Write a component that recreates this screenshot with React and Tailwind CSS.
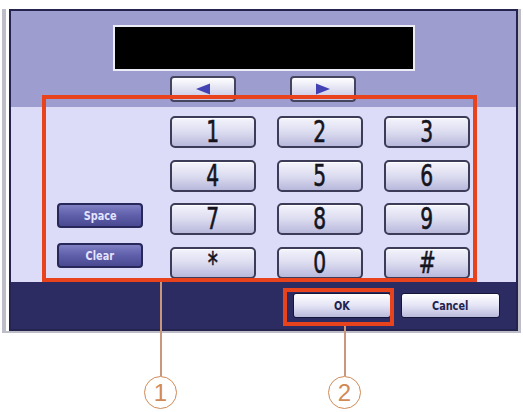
const keys = ["1", "2", "3", "4", "5", "6", "7", "8", "9", "*", "0", "#"];

function KeyButton({ label }) {
  return (
    <button className="h-[32px] rounded-[5px] border-2 border-[#3c3c58] bg-gradient-to-b from-[#f4f4fc] via-[#dcdcf0] to-[#b8b8dc] shadow-[inset_0_1px_0_#ffffff] flex items-center justify-center">
      <span className="inline-block scale-x-75 text-[30px] leading-none text-[#14141e] [font-family:'DejaVu_Sans_Condensed','DejaVu_Sans',sans-serif] [-webkit-text-stroke:0.6px_#14141e]">
        {label}
      </span>
    </button>
  );
}

function SideButton({ label }) {
  return (
    <button className="h-[25px] w-[86px] rounded-[4px] border-2 border-[#27275a] bg-gradient-to-b from-[#8080c4] via-[#5e5eaa] to-[#4a4a92] flex items-center justify-center">
      <span className="inline-block scale-x-90 text-[12px] font-bold text-[#e4e4ff] [font-family:'DejaVu_Sans_Condensed','DejaVu_Sans',sans-serif]">
        {label}
      </span>
    </button>
  );
}

function FooterButton({ label, width }) {
  return (
    <button
      className={`${width} h-[25px] rounded-[3px] border border-[#15153a] bg-gradient-to-b from-[#ffffff] via-[#e4e4f6] to-[#babadc] flex items-center justify-center`}
    >
      <span className="inline-block scale-x-90 text-[12px] font-bold text-[#22224e] [font-family:'DejaVu_Sans_Condensed','DejaVu_Sans',sans-serif]">
        {label}
      </span>
    </button>
  );
}

function ArrowButton({ dir }) {
  return (
    <button className="h-[26px] w-[66px] rounded-[4px] border-2 border-[#44445e] bg-gradient-to-b from-[#ffffff] to-[#c4c4e4] flex items-center justify-center">
      <svg width="16" height="12" viewBox="0 0 16 12">
        {dir === "left" ? (
          <polygon points="1,6 15,0.5 15,11.5" fill="#4242b4" />
        ) : (
          <polygon points="15,6 1,0.5 1,11.5" fill="#4242b4" />
        )}
      </svg>
    </button>
  );
}

function Callout({ n, className }) {
  return (
    <div
      className={`absolute w-[33px] h-[33px] rounded-full border-[1.5px] border-[#d08a56] flex items-center justify-center text-[24px] leading-none text-[#d08a56] [font-family:'Liberation_Sans',sans-serif] ${className}`}
    >
      {n}
    </div>
  );
}

export default function App() {
  return (
    <div className="relative w-[523px] h-[412px] bg-white overflow-hidden">
      {/* device frame */}
      <div className="ml-[2px] mt-[9px] w-[519px] border-l-[4px] border-r-[3px] border-b-[2px] border-[#bdbdc8] pl-[3px] bg-white">
        <div className="border-[2px] border-[#24244e] flex flex-col">
          {/* display + arrows */}
          <div className="h-[96px] bg-[#9d9dcf] pt-[14px]">
            <div className="ml-[102px] w-[302px] h-[46px] border-2 border-[#ececf6] bg-black" />
            <div className="mt-[5px] ml-[159px] flex gap-[54px]">
              <ArrowButton dir="left" />
              <ArrowButton dir="right" />
            </div>
          </div>

          {/* keypad */}
          <div className="h-[175px] bg-[#dcdcf8] pt-[9px] pl-[46px] flex">
            <div className="w-[86px] h-[152px] flex flex-col justify-end gap-[15px]">
              <SideButton label="Space" />
              <SideButton label="Clear" />
            </div>
            <div className="ml-[27px] grid grid-cols-[86px_86px_86px] gap-x-[21px] gap-y-[8px]">
              {keys.map((k) => (
                <KeyButton key={k} label={k} />
              ))}
            </div>
          </div>

          {/* footer */}
          <div className="h-[47px] bg-[#2c2c62] flex items-center justify-end gap-[10px] pr-[16px]">
            <FooterButton label="OK" width="w-[98px]" />
            <FooterButton label="Cancel" width="w-[99px]" />
          </div>
        </div>
      </div>

      {/* annotation overlays */}
      <div className="absolute left-[42px] top-[95px] w-[435px] h-[187px] border-[4px] border-[#e8431c]" />
      <div className="absolute left-[283px] top-[288px] w-[111px] h-[38px] border-[4px] border-[#e8431c]" />

      <div className="absolute left-[160px] top-[282px] w-[2px] h-[94px] bg-[#c9987c]" />
      <div className="absolute left-[344px] top-[326px] w-[2px] h-[50px] bg-[#c9987c]" />

      <Callout n="1" className="left-[144px] top-[376px]" />
      <Callout n="2" className="left-[328px] top-[376px]" />
    </div>
  );
}
